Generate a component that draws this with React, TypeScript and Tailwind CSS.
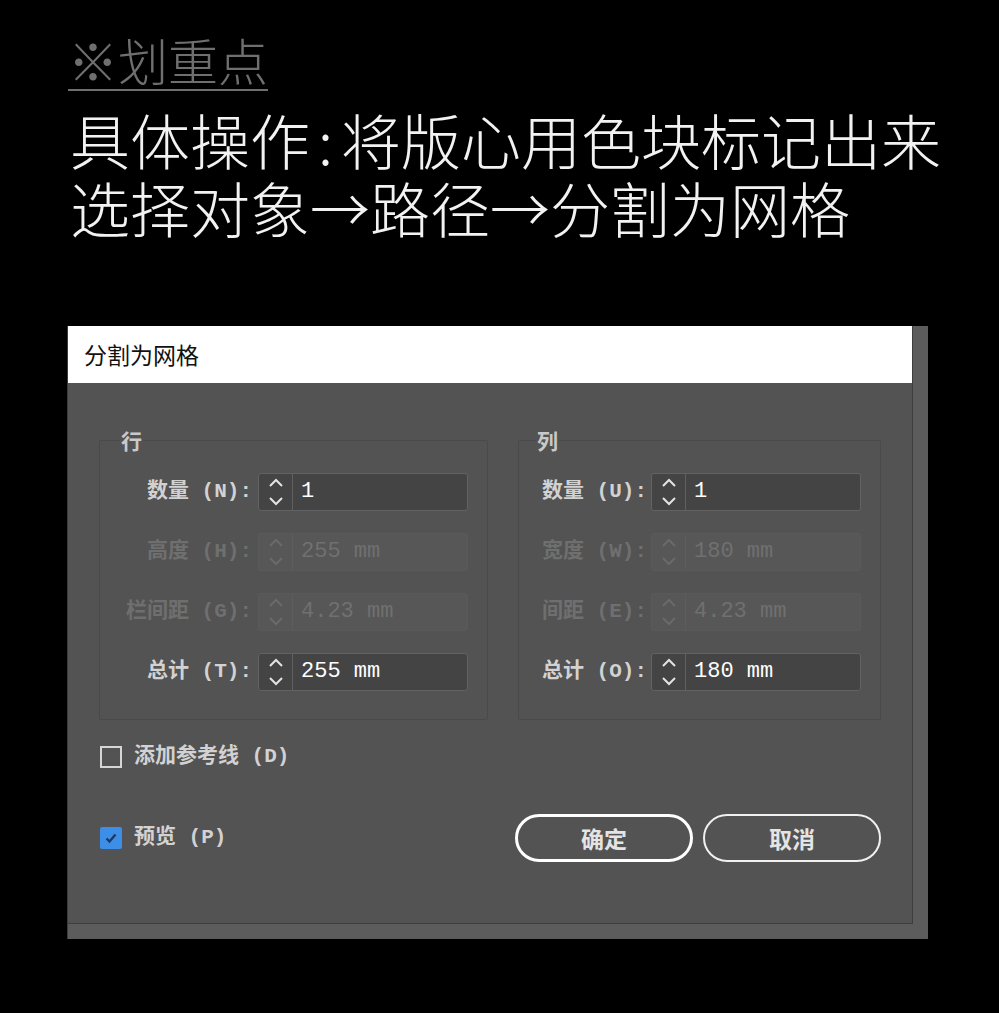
import React from 'react';

type Field = { label: string; value: string; disabled?: boolean };

const rowFields: Field[] = [
  { label: '数量 (N):', value: '1' },
  { label: '高度 (H):', value: '255 mm', disabled: true },
  { label: '栏间距 (G):', value: '4.23 mm', disabled: true },
  { label: '总计 (T):', value: '255 mm' },
];

const colFields: Field[] = [
  { label: '数量 (U):', value: '1' },
  { label: '宽度 (W):', value: '180 mm', disabled: true },
  { label: '间距 (E):', value: '4.23 mm', disabled: true },
  { label: '总计 (O):', value: '180 mm' },
];

const labelFont = "font-['Liberation_Mono','Noto_Sans_CJK_SC',monospace] text-[21px] font-bold";

const Spinner: React.FC<{ value: string; disabled?: boolean }> = ({ value, disabled }) => (
  <div
    className={`flex h-[38px] w-[210px] rounded-[3px] border ${
      disabled ? 'border-[#5a5a5a] bg-[#575757]' : 'border-[#626262] bg-[#444444]'
    }`}
  >
    <div
      className={`flex w-[34px] shrink-0 items-center justify-center border-r ${
        disabled ? 'border-[#5d5d5d]' : 'border-[#606060]'
      }`}
    >
      <svg width="16" height="36" viewBox="0 0 16 36" fill="none" stroke={disabled ? '#6a6a6a' : '#e4e4e4'} strokeWidth="2">
        <path d="M2 12 L8 6 L14 12" />
        <path d="M2 24 L8 30 L14 24" />
      </svg>
    </div>
    <span
      className={`pl-[8px] font-['Liberation_Mono',monospace] text-[22px] leading-[36px] ${
        disabled ? 'text-[#707070]' : 'text-white'
      }`}
    >
      {value}
    </span>
  </div>
);

const Group: React.FC<{
  title: string;
  fields: Field[];
  boxClass: string;
  gridClass: string;
  legendClass: string;
}> = ({ title, fields, boxClass, gridClass, legendClass }) => (
  <fieldset className={`rounded-[2px] border border-[#4a4a4a] pt-[20px] pb-[28px] pr-[19px] ${boxClass}`}>
    <legend className={`px-[1px] text-[21px] font-bold leading-[26px] text-[#c9c9c9] font-['Noto_Sans_CJK_SC',sans-serif] ${legendClass}`}>
      {title}
    </legend>
    <div className={`grid items-center gap-y-[22px] ${gridClass}`}>
      {fields.map((f) => (
        <React.Fragment key={f.label}>
          <span className={`text-right ${labelFont} ${f.disabled ? 'text-[#6f6f6f]' : 'text-[#d2d2d2]'}`}>{f.label}</span>
          <Spinner value={f.value} disabled={f.disabled} />
        </React.Fragment>
      ))}
    </div>
  </fieldset>
);

export default function App() {
  return (
    <div className="h-[1013px] w-[999px] overflow-hidden bg-black font-['Noto_Sans_CJK_SC',sans-serif]">
      {/* Heading */}
      <div className="pl-[68px] pt-[29px]">
        <span className="inline-block border-b-2 border-[#6f6f6f] text-[50px] font-light leading-[60px] text-[#6f6f6f]">
          ※划重点
        </span>
      </div>
      <div className="mt-[14px] pl-[70px] text-[60px] font-light leading-[68px] text-[#f2f2f2]">
        <p className="whitespace-nowrap">
          具体操作<span className="mx-[8px]">:</span>将版心用色块标记出来
        </p>
        <p className="whitespace-nowrap">选择对象→路径→分割为网格</p>
      </div>

      {/* Dialog */}
      <div className="ml-[67px] mt-[85px] w-[861px] border-l border-[#3c3c3c] bg-[#5c5c5c] pr-[15px] pb-[15px]">
        <div className="h-[598px] border-r border-b border-[#3e3e3e] bg-[#535353]">
          <div className="flex h-[57px] items-center bg-white pl-[16px] text-[23px] text-[#111]">分割为网格</div>

          <div className="px-[31px] pt-[44px]">
            <div className="flex justify-between">
              <Group
                title="行"
                fields={rowFields}
                boxClass="w-[389px]"
                gridClass="grid-cols-[152px_210px] gap-x-[6px]"
                legendClass="ml-[20px]"
              />
              <Group
                title="列"
                fields={colFields}
                boxClass="w-[363px]"
                gridClass="grid-cols-[128px_210px] gap-x-[4px]"
                legendClass="ml-[17px]"
              />
            </div>

            <div className="ml-px mt-[24px] flex h-[26px] items-center gap-[12px]">
              <span className="h-[22px] w-[22px] border-2 border-[#d6d6d6]" />
              <span className={`${labelFont} text-[#d2d2d2]`}>添加参考线 (D)</span>
            </div>

            <div className="mt-[44px] flex items-center justify-between">
              <div className="ml-px flex items-center gap-[12px]">
                <span className="flex h-[22px] w-[22px] items-center justify-center rounded-[2px] bg-[#3d8ee6]">
                  <svg width="14" height="14" viewBox="0 0 14 14" fill="none">
                    <path d="M2.5 7.5 L5.5 10.5 L11.5 3.5" stroke="#1d3a66" strokeWidth="2.4" />
                  </svg>
                </span>
                <span className={`${labelFont} text-[#d2d2d2]`}>预览 (P)</span>
              </div>
              <div className="flex gap-[10px]">
                <button className="flex h-[48px] w-[178px] items-center justify-center rounded-full border-[3px] border-white text-[23px] font-bold text-[#e4e4e4]">
                  确定
                </button>
                <button className="flex h-[48px] w-[178px] items-center justify-center rounded-full border-2 border-[#f0f0f0] text-[23px] font-bold text-[#e4e4e4]">
                  取消
                </button>
              </div>
            </div>
          </div>
        </div>
      </div>
    </div>
  );
}
